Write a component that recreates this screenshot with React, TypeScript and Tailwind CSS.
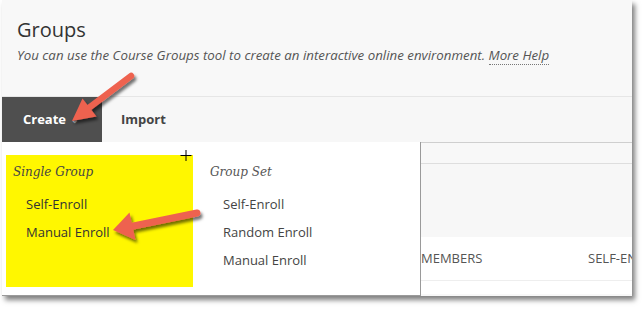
import React from "react";

const sans = { fontFamily: '"Open Sans", "Noto Sans", sans-serif' };
const serif = { fontFamily: '"DejaVu Serif", "Liberation Serif", serif' };

function Arrows() {
  return (
    <svg
      className="absolute left-0 top-0 pointer-events-none"
      width={643}
      height={310}
      viewBox="0 0 643 310"
    >
      <defs>
        <filter id="sh" x="-20%" y="-20%" width="150%" height="150%">
          <feDropShadow dx="2" dy="3" stdDeviation="1.6" floodColor="#000" floodOpacity="0.55" />
        </filter>
      </defs>
      <g filter="url(#sh)" fill="#ee6250" stroke="#ee6250">
        <line x1="131" y1="76" x2="88" y2="108.5" strokeWidth="6.5" strokeLinecap="round" />
        <polygon points="72,121 82.5,98.5 96.5,116.5" stroke="none" />
        <line x1="197" y1="213" x2="131" y2="226.5" strokeWidth="7" strokeLinecap="round" />
        <polygon points="113,230 129.5,212.5 135.5,240" stroke="none" />
      </g>
      <g stroke="#000" strokeWidth="1">
        <line x1="180.5" y1="155.5" x2="191.5" y2="155.5" />
        <line x1="186" y1="150" x2="186" y2="161" />
      </g>
    </svg>
  );
}

export default function App() {
  return (
    <div className="relative w-[643px] h-[310px] bg-white overflow-hidden" style={sans}>
      <div className="relative ml-[2px] w-[630px] h-[296px] bg-[#f8f8f8] overflow-hidden shadow-[3px_4px_5px_rgba(0,0,0,0.5)]">
        <div className="h-[96px] pl-[15px] pt-[15px]">
          <div className="text-[20px] leading-[30px] text-[#333]">Groups</div>
          <div className="mt-[1px] text-[13.3px] leading-[18px] italic text-[#555] whitespace-nowrap">
            You can use the Course Groups tool to create an interactive online environment.{" "}
            <span className="border-b border-dotted border-[#777]">More Help</span>
          </div>
        </div>
        <div className="flex h-[47px] border-t border-b border-t-[#e6e6e6] border-b-[#cfcfcf] bg-[#f7f7f7]">
          <div className="flex items-center w-[100px] bg-[#4f4f4f] pl-[21px] text-white font-bold text-[13px]">
            Create
            <span className="ml-[5px] text-[9px] text-[#aaa]">&#8964;</span>
          </div>
          <div className="flex items-center ml-[19px] font-bold text-[13px] text-[#444]">Import</div>
        </div>
        <div className="h-[21px] border-b border-[#dedede] bg-[#f8f8f8]" />
        <div className="h-[73px] bg-[#f7f7f7]" />
        <div className="flex h-[44px] items-center bg-white border-b border-[#eeeeee] text-[13px] text-[#555] uppercase whitespace-nowrap">
          <div className="w-[419px] shrink-0">Name</div>
          <div className="w-[167px] shrink-0">Members</div>
          <div className="shrink-0">Self-Enrollment</div>
        </div>
        <div className="h-[13px] bg-white" />

        <div className="absolute left-0 top-[142px] w-[419px] h-[154px] bg-white border-r border-b border-[#9a9a9a] flex pt-[13px] pl-[4px]">
          <div className="w-[187px] h-[132px] bg-[#fff700] pl-[7px] pt-[7px]">
            <div className="text-[12px] leading-[20px] italic text-[#444]" style={serif}>
              Single Group
            </div>
            <div className="mt-[8px] pl-[13px] text-[13px] leading-[28px] text-[#333]">
              <div>Self-Enroll</div>
              <div>Manual Enroll</div>
            </div>
          </div>
          <div className="ml-[17px] pt-[7px]">
            <div className="text-[12px] leading-[20px] italic text-[#555]" style={serif}>
              Group Set
            </div>
            <div className="mt-[8px] pl-[13px] text-[13px] leading-[28px] text-[#444]">
              <div>Self-Enroll</div>
              <div>Random Enroll</div>
              <div>Manual Enroll</div>
            </div>
          </div>
        </div>
      </div>
      <Arrows />
    </div>
  );
}
